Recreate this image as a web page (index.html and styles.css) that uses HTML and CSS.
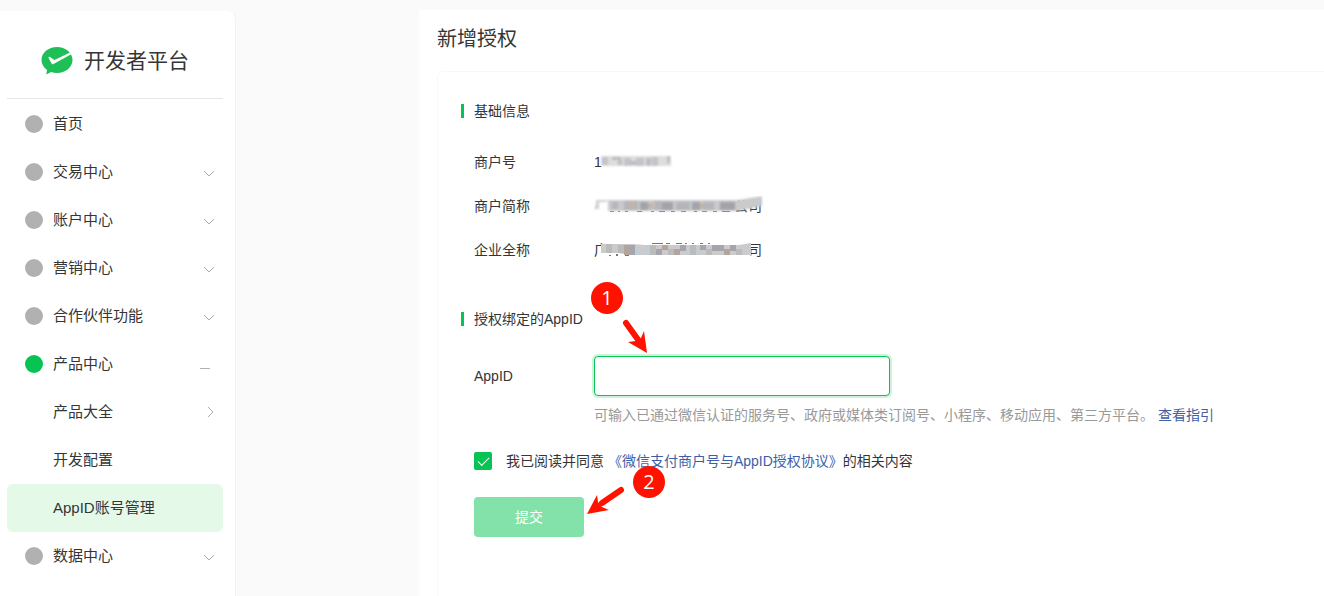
FILE: index.html
```html
<!DOCTYPE html>
<html lang="zh-CN">

<head>
	<meta charset="utf-8">
	<title>新增授权 - 开发者平台</title>
	<meta name="viewport" content="width=device-width, initial-scale=1">
	<link rel="stylesheet" href="styles.css">
</head>

<body>
	<div class="layout">
		<aside class="sidebar">
			<div class="brand">
				<svg class="brand-logo" viewBox="0 0 32 28" aria-hidden="true">
					<path fill="#1fbf57" d="M16 0C7.400 0 .500 5.600 .500 13c0 4 2.200 7.600 5.600 10L5.200 27.500l5-2.500c1.800.600 3.700 1 5.800 1 8.600 0 15.500-5.700 15.500-13S24.600 0 16 0z"/>
					<path fill="#fff" d="M7.500 10.300c.400-.700 1-.700 1.600-.300l3.400 2.600c.500.300.900.400 1.500.200L29 5.500l1.200 1.700L12.500 17c-.800.500-1.600.300-2-.600l-2.900-5.300c-.200-.300-.200-.600-.100-.800z"/>
				</svg>
				<span>开发者平台</span>
			</div>
			<nav class="menu">
				<a href="#"><i class="dot"></i>首页</a>
				<a href="#"><i class="dot"></i>交易中心<svg class="arrow" viewBox="0 0 12 12"><path d="M1 5l5 5 5-5"/></svg></a>
				<a href="#"><i class="dot"></i>账户中心<svg class="arrow" viewBox="0 0 12 12"><path d="M1 5l5 5 5-5"/></svg></a>
				<a href="#"><i class="dot"></i>营销中心<svg class="arrow" viewBox="0 0 12 12"><path d="M1 5l5 5 5-5"/></svg></a>
				<a href="#"><i class="dot"></i>合作伙伴功能<svg class="arrow" viewBox="0 0 12 12"><path d="M1 5l5 5 5-5"/></svg></a>
				<a href="#" class="open"><i class="dot"></i>产品中心<i class="minus"></i></a>
				<a href="#" class="sub">产品大全<svg class="arrow" viewBox="0 0 12 12"><path d="M5 1l5 5-5 5"/></svg></a>
				<a href="#" class="sub">开发配置</a>
				<a href="#" class="sub active">AppID账号管理</a>
				<a href="#"><i class="dot"></i>数据中心<svg class="arrow" viewBox="0 0 12 12"><path d="M1 5l5 5 5-5"/></svg></a>
			</nav>
		</aside>

		<main class="main">
			<h1>新增授权</h1>
			<form class="card">
				<h2>基础信息</h2>
				<dl class="info">
					<dt>商户号</dt>
					<dd>1
						<svg class="mask" viewBox="0 0 170 20" aria-hidden="true">
							<g class="soft">
								<path fill="#ddd" d="M7 4h70v10H7z"/>
								<path fill="#c4c4c8" d="M8 5h6v8H8zM30 6h7v8h-7zM42 6h8v8h-8zM58 5h6v9h-6z"/>
								<path fill="#bbbec3" d="M18 5h9v3h-9zM24 8h4v5h-4zM36 9h6v4h-6zM52 6h5v8h-5zM73 4h3v7h-3z"/>
							</g>
						</svg>
					</dd>
					<dt>商户简称</dt>
					<dd><span class="last">公司</span>
						<svg class="mask" viewBox="0 0 170 20" aria-hidden="true">
							<path fill="#777" d="M16 15h4v1h-4zM24 15h2v1h-2zM31 15h3v1h-3zM43 15h5v1h-5zM57 15h3v1h-3zM65 15h6v1h-6zM77 15h4v1h-4zM87 15h5v1h-5zM100 15h3v1h-3zM108 15h5v1h-5zM119 15h4v1h-4zM128 15h8v1h-8z"/>
							<g class="soft">
								<path fill="#d0d0d2" d="M2 4h11v2H5v7H0l2-5z"/>
								<path fill="#cacacd" d="M14 4h130l24-4v10l-24 5H14z"/>
								<path fill="#b5b5ba" d="M18 6h6v7h-6zM30 5h14v9H30zM60 5h8v9h-8zM82 6h14v8H82zM110 6h10v8h-10z"/>
								<path fill="#a2a4aa" d="M46 6h8v8h-8zM68 6h11v8H68zM98 6h8v8h-8zM126 6h15v8h-15z"/>
								<path fill="#c3b4aa" d="M36 6h6v7h-6zM54 7h5v6h-5zM106 7h4v6h-4z"/>
							</g>
						</svg>
					</dd>
					<dt>企业全称</dt>
					<dd>广<span class="last">司</span>
						<svg class="mask" viewBox="0 0 170 20" aria-hidden="true">
							<path fill="#777" d="M15 15h2v1h-2zM22 14h2v2h-2zM31 15h4v1h-4zM58 3h11v1H58zM72 3h4v1h-4zM82 3h6v1h-6zM91 3h2v1h-2zM98 3h2v1h-2zM106 3h3v1h-3zM114 3h2v1h-2z"/>
							<path fill="#cbcbce" d="M7 4h32l12 1h94l12-2v12H36l-12-2H7z"/>
							<path fill="#bbb" d="M12 4h6v9h-6zM24 5h6v8h-6zM56 5h6v10h-6zM74 9h6v6h-6zM96 5h6v10h-6zM112 9h6v6h-6zM142 9h6v6h-6z"/>
							<path fill="#a4a6ac" d="M36 5h5v10h-5zM62 9h6v6h-6zM86 5h6v6h-6zM106 5h6v5h-6zM118 5h12v6h-12zM136 5h6v6h-6z"/>
							<path fill="#b1a59d" d="M30 5h6v10h-6zM68 5h6v5h-6zM80 9h6v6h-6zM130 9h6v6h-6z"/>
							<path fill="#c3cbd5" d="M41 9h6v6h-6zM51 6h5v9h-5zM92 9h4v6h-4zM102 9h4v6h-4z"/>
						</svg>
					</dd>
				</dl>

				<h2>授权绑定的AppID</h2>
				<div class="field">
					<label for="appid">AppID</label>
					<div class="field-body">
						<input type="text" id="appid">
						<p class="tip">可输入已通过微信认证的服务号、政府或媒体类订阅号、小程序、移动应用、第三方平台。 <a href="#">查看指引</a></p>
						<svg class="callout callout-1" viewBox="0 0 64 72">
							<circle cx="16" cy="16" r="16"/>
							<path class="line" d="M35 41l13 18"/>
							<path d="M56 71L37 60l8-1 5-3 3-7z"/>
							<text x="16" y="23">1</text>
						</svg>
					</div>
				</div>

				<div class="agree">
					<input type="checkbox" id="agree" checked>
					<label for="agree">我已阅读并同意 <a href="#">《微信支付商户号与AppID授权协议》</a>的相关内容</label>
				</div>

				<div class="actions">
					<button type="button">提交</button>
					<svg class="callout callout-2" viewBox="0 0 80 50">
						<circle cx="64" cy="16" r="16"/>
						<path class="line" d="M36 24L17 37"/>
						<path d="M2 48l10-19 1 7 4 5 7 3z"/>
						<text x="64" y="23">2</text>
					</svg>
				</div>
			</form>
		</main>
	</div>
</body>

</html>
```
FILE: styles.css
```css
* {
	box-sizing: border-box;
}

body {
	margin: 0;
	background: #fafafa;
	color: #353535;
	font: 14px/20px "Liberation Sans", "Noto Sans CJK SC", sans-serif;
}

a {
	color: #3e5fa8;
	text-decoration: none;
}

.layout {
	display: flex;
	gap: 183px;
	min-height: 100vh;
	padding-top: 10px;
}

/* sidebar */
.sidebar {
	flex: 0 0 236px;
	margin-top: 1px;
	padding: 0 12px 0 7px;
	background: #fff;
	border-right: 1px solid #f2f2f2;
	border-radius: 0 8px 0 0;
}

.brand {
	display: flex;
	align-items: center;
	gap: 11px;
	height: 88px;
	margin-bottom: 1px;
	padding: 12px 0 0 34px;
	border-bottom: 1px solid #e7e7e7;
	font-size: 21px;
	line-height: 28px;
}

.brand-logo {
	width: 32px;
	height: 28px;
}

.menu a {
	display: flex;
	align-items: center;
	height: 48px;
	padding: 0 8px 0 18px;
	border-radius: 6px;
	color: #353535;
	font-size: 15px;
}

.menu .sub {
	padding-left: 46px;
}

.menu .active {
	background: #e5f9e9;
}

.dot {
	width: 18px;
	height: 18px;
	margin-right: 10px;
	border-radius: 50%;
	background: #b0b1b3;
}

.open .dot {
	background: #07c353;
}

.arrow {
	width: 12px;
	height: 12px;
	margin-left: auto;
	fill: none;
	stroke: #aaa;
}

.minus {
	width: 10px;
	height: 1px;
	margin: 9px 5px 0 auto;
	background: #b2b2b2;
}

/* content */
.main {
	flex: 1;
	min-width: 0;
	display: flex;
	flex-direction: column;
	padding: 15px 0 0 18px;
	background: #fff;
}

h1 {
	margin: 0 0 18px;
	font-size: 20px;
	font-weight: normal;
	line-height: 28px;
}

.card {
	flex: 1;
	padding: 29px 24px 24px 23px;
	border: solid #f8f8f8;
	border-width: 1px 0 0 1px;
	border-radius: 6px 0 0 0;
}

h2 {
	display: flex;
	align-items: center;
	margin: 0;
	font-size: 14px;
	font-weight: normal;
	line-height: 20px;
}

h2::before {
	content: "";
	width: 3px;
	height: 14px;
	margin-right: 10px;
	background: #07c353;
}

.info {
	display: grid;
	grid-template-columns: 120px 1fr;
	margin: 19px 0 37px 13px;
	line-height: 44px;
}

.info dd {
	position: relative;
	margin: 0;
}

.mask {
	position: absolute;
	left: 0;
	top: 12px;
	width: 170px;
	height: 20px;
}

.soft {
	filter: blur(1px);
}

.last {
	position: absolute;
	left: 0;
	width: 168px;
	text-align: right;
}

.field {
	display: flex;
	margin: 27px 0 0 13px;
}

.field label {
	width: 120px;
	line-height: 40px;
}

.field-body {
	position: relative;
	flex: 1;
}

.field input {
	display: block;
	width: 296px;
	height: 40px;
	padding: 0 12px;
	border: 1px solid #07c353;
	border-radius: 4px;
	outline: none;
	box-shadow: 0 0 0 2px #cdf3dc;
	font: inherit;
}

.tip {
	margin: 9px 0 0;
	color: #999;
}

.agree {
	display: flex;
	align-items: center;
	gap: 14px;
	margin: 26px 0 0 13px;
}

.agree input {
	appearance: none;
	width: 18px;
	height: 18px;
	margin: 0;
	border-radius: 2px;
	background: #07c353;
	display: grid;
	place-items: center;
}

.agree input:checked::before {
	content: "";
	width: 10px;
	height: 5px;
	margin-bottom: 3px;
	border: solid #fff;
	border-width: 0 0 1px 1px;
	transform: rotate(-45deg);
}

.actions {
	position: relative;
	margin: 26px 0 0 13px;
}

.actions button {
	display: block;
	width: 110px;
	height: 40px;
	border: 0;
	border-radius: 4px;
	background: #82e2a9;
	color: #fff;
	font: inherit;
}

/* numbered step markers */
.callout {
	position: absolute;
	fill: #ff1200;
	pointer-events: none;
}

.callout .line {
	stroke: #ff1200;
	stroke-width: 6px;
	stroke-linecap: round;
}

.callout text {
	fill: #fff;
	font: 20px "Open Sans", sans-serif;
	text-anchor: middle;
}

.callout-1 {
	left: -3px;
	top: -74px;
	width: 64px;
	height: 72px;
}

.callout-2 {
	left: 111px;
	top: -31px;
	width: 80px;
	height: 50px;
}
```
